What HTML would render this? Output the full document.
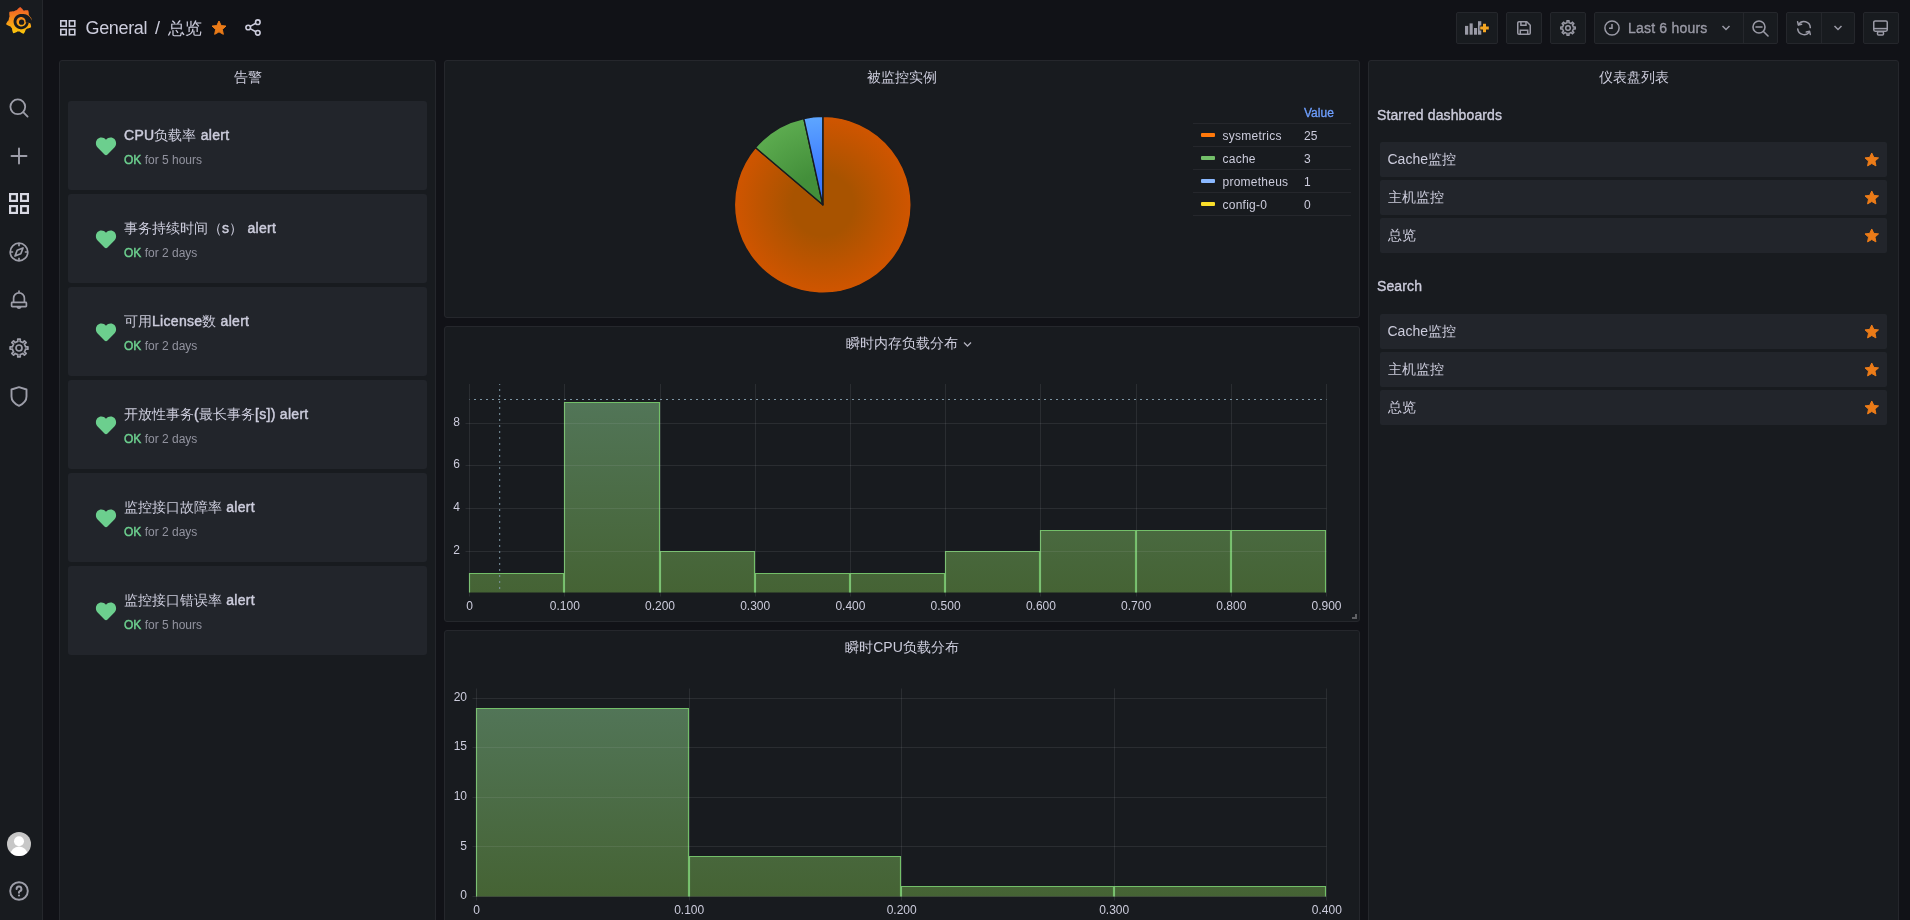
<!DOCTYPE html>
<html><head><meta charset="utf-8">
<style>
*{box-sizing:border-box;margin:0;padding:0}
html,body{width:1910px;height:920px;overflow:hidden;background:#111217;will-change:transform;font-family:"Liberation Sans",sans-serif;color:#ccccdc}
.abs{position:absolute}
#side{position:absolute;left:0;top:0;width:43px;height:920px;background:#181b1f;border-right:1px solid #25272c}
.panel{position:absolute;background:#181b1f;border:1px solid #25272c;border-radius:3px}
.ptitle{position:absolute;left:0;right:0;text-align:center;font-size:14px;line-height:16px;font-weight:normal;color:#ccccdc}
.card{position:absolute;left:8px;width:359px;height:89px;background:#22252b;border-radius:3px}
.card .ht{position:absolute;left:27px;top:35px}
.card .t1{position:absolute;left:56px;top:26px;font-size:14px;line-height:16px;color:#ccccdc;white-space:nowrap}
.m{-webkit-text-stroke:0.45px currentColor;letter-spacing:0.3px}
.card .t2{position:absolute;left:56px;top:52px;font-size:12px;line-height:14px;color:rgba(204,204,220,.65);white-space:nowrap}
.card .t2 b{color:#6ccf8e;font-weight:normal;-webkit-text-stroke:0.45px currentColor}
.btn{position:absolute;top:12px;height:32px;background:#181b1f;border:1px solid #25272c;border-radius:2px}
.dl{position:absolute;left:11px;width:507px;height:34.6px;background:#22252b;border-radius:2px;font-size:14px;line-height:34px;padding-left:7.5px;color:#ccccdc}
.dl svg{position:absolute;right:7.5px;top:10.2px}
.sh{position:absolute;left:8px;font-size:14px;color:#ccccdc;letter-spacing:0.12px;-webkit-text-stroke:0.35px currentColor}
</style></head>
<body>

<div id="side">
 <svg class="abs" style="left:0;top:0" width="42" height="42" viewBox="0 0 42 42">
  <defs><linearGradient id="lg" x1="0" y1="7" x2="0" y2="34" gradientUnits="userSpaceOnUse"><stop offset="0" stop-color="#f05a28"/><stop offset="1" stop-color="#fbca0a"/></linearGradient></defs>
  <path fill="url(#lg)" d="M8.26 20.60 L8.47 20.38 L8.69 20.17 L8.72 19.96 L8.73 19.74 L8.75 19.53 L8.78 19.32 L8.80 19.11 L8.83 18.89 L8.87 18.68 L8.91 18.47 L8.95 18.26 L9.00 18.06 L9.05 17.85 L9.11 17.64 L9.17 17.44 L9.23 17.23 L9.30 17.03 L9.37 16.83 L9.45 16.63 L9.53 16.43 L9.57 16.21 L9.51 15.95 L9.45 15.68 L9.40 15.40 L9.36 15.13 L9.33 14.85 L9.30 14.56 L9.28 14.28 L9.27 13.99 L9.27 13.70 L9.27 13.40 L9.28 13.10 L9.30 12.80 L9.33 12.50 L9.36 12.20 L9.41 11.90 L9.71 11.81 L10.00 11.73 L10.29 11.65 L10.59 11.59 L10.88 11.53 L11.17 11.48 L11.46 11.44 L11.75 11.41 L12.04 11.38 L12.32 11.36 L12.60 11.35 L12.88 11.35 L13.16 11.36 L13.43 11.37 L13.70 11.39 L13.90 11.31 L14.09 11.20 L14.27 11.09 L14.46 10.99 L14.65 10.89 L14.84 10.79 L15.04 10.70 L15.23 10.61 L15.43 10.53 L15.63 10.45 L15.83 10.37 L16.03 10.30 L16.23 10.23 L16.44 10.17 L16.64 10.11 L16.85 10.05 L17.01 9.82 L17.19 9.60 L17.37 9.38 L17.56 9.16 L17.76 8.95 L17.96 8.74 L18.17 8.54 L18.39 8.33 L18.62 8.13 L18.85 7.94 L19.10 7.75 L19.34 7.57 L19.60 7.39 L19.86 7.21 L20.13 7.04 L20.39 7.14 L20.64 7.34 L20.89 7.54 L21.12 7.74 L21.35 7.95 L21.57 8.16 L21.78 8.38 L21.99 8.60 L22.18 8.82 L22.37 9.05 L22.56 9.28 L22.73 9.51 L22.89 9.74 L23.05 9.98 L23.20 10.21 L23.37 10.37 L23.57 10.45 L23.77 10.53 L24.01 10.53 L24.27 10.47 L24.54 10.42 L24.81 10.38 L25.08 10.34 L25.36 10.31 L25.65 10.29 L25.93 10.27 L26.22 10.26 L26.51 10.26 L26.80 10.27 L27.10 10.28 L27.39 10.30 L27.69 10.33 L28.00 10.37 L28.23 10.49 L28.32 10.79 L28.40 11.08 L28.48 11.37 L28.55 11.65 L28.60 11.94 L28.65 12.23 L28.70 12.52 L28.73 12.80 L28.76 13.08 L28.78 13.36 L28.79 13.64 L28.80 13.92 L28.80 14.19 L28.79 14.46 L28.78 14.72 L28.89 14.90 L29.00 15.09 L29.11 15.27 L29.21 15.46 L29.31 15.65 L29.41 15.84 L29.50 16.04 L29.66 16.20 L29.82 16.37 L29.97 16.54 L30.12 16.72 L30.27 16.90 L30.42 17.08 L30.56 17.27 L30.70 17.47 L30.84 17.67 L30.97 17.87 L31.10 18.08 L31.22 18.29 L31.34 18.50 L31.46 18.72 L31.57 18.94 L31.56 19.18 L31.51 19.43 L31.45 19.67 L31.39 19.90 L31.32 20.14 L31.25 20.37 L31.17 20.60 L31.09 20.83 L31.01 21.05 L30.92 21.27 L30.82 21.48 L30.72 21.70 L30.62 21.90 L30.52 22.11 L30.41 22.31 L30.33 22.52 L30.29 22.73 L30.25 22.94 L30.31 23.17 L30.41 23.42 L30.50 23.67 L30.58 23.93 L30.66 24.19 L30.74 24.46 L30.80 24.73 L30.86 25.01 L30.92 25.29 L30.96 25.57 L31.01 25.86 L31.04 26.15 L31.07 26.44 L31.08 26.74 L31.10 27.04 L30.98 27.27 L30.71 27.41 L30.45 27.54 L30.18 27.67 L29.91 27.79 L29.64 27.90 L29.38 28.00 L29.11 28.10 L28.84 28.18 L28.57 28.26 L28.30 28.33 L28.04 28.40 L27.77 28.46 L27.51 28.51 L27.24 28.55 L27.00 28.60 L26.84 28.75 L26.68 28.89 L26.51 29.03 L26.35 29.16 L26.18 29.29 L26.01 29.42 L25.83 29.54 L25.68 29.70 L25.61 29.98 L25.52 30.26 L25.42 30.54 L25.32 30.81 L25.21 31.09 L25.09 31.37 L24.96 31.64 L24.82 31.92 L24.67 32.19 L24.51 32.47 L24.35 32.74 L24.18 33.00 L23.99 33.27 L23.80 33.53 L23.60 33.80 L23.29 33.70 L22.99 33.58 L22.69 33.46 L22.39 33.34 L22.11 33.20 L21.83 33.06 L21.55 32.92 L21.28 32.77 L21.02 32.61 L20.77 32.44 L20.52 32.28 L20.28 32.10 L20.04 31.93 L19.82 31.74 L19.60 31.56 L19.39 31.50 L19.17 31.49 L18.96 31.48 L18.74 31.47 L18.53 31.45 L18.32 31.42 L18.11 31.40 L17.89 31.37 L17.67 31.40 L17.42 31.57 L17.16 31.73 L16.89 31.89 L16.62 32.04 L16.33 32.18 L16.05 32.31 L15.75 32.44 L15.45 32.57 L15.14 32.68 L14.83 32.79 L14.51 32.89 L14.19 32.98 L13.85 33.06 L13.52 33.14 L13.19 33.18 L13.04 32.86 L12.91 32.55 L12.78 32.23 L12.67 31.92 L12.56 31.60 L12.46 31.28 L12.37 30.97 L12.30 30.65 L12.23 30.34 L12.17 30.03 L12.12 29.72 L12.08 29.41 L12.05 29.10 L12.03 28.79 L12.01 28.49 L11.89 28.31 L11.74 28.15 L11.60 28.00 L11.45 27.84 L11.31 27.68 L11.17 27.51 L11.04 27.35 L10.91 27.18 L10.78 27.01 L10.66 26.83 L10.54 26.66 L10.42 26.48 L10.23 26.34 L9.94 26.26 L9.65 26.18 L9.35 26.08 L9.06 25.97 L8.77 25.85 L8.49 25.72 L8.20 25.59 L7.91 25.44 L7.62 25.29 L7.34 25.12 L7.06 24.95 L6.78 24.77 L6.50 24.57 L6.22 24.37 L6.02 24.14 L6.16 23.83 L6.30 23.52 L6.45 23.22 L6.60 22.92 L6.77 22.63 L6.93 22.35 L7.11 22.08 L7.29 21.81 L7.47 21.55 L7.66 21.30 L7.86 21.06 L8.06 20.83 Z"/>
  <path fill="#181b1f" d="M32.23 23.54 L32.21 23.10 L32.17 22.66 L32.11 22.22 L32.04 21.79 L31.95 21.37 L31.84 20.95 L31.72 20.54 L31.58 20.14 L31.42 19.75 L31.26 19.37 L31.07 19.00 L30.88 18.64 L30.67 18.29 L30.45 17.96 L30.22 17.63 L29.97 17.32 L29.72 17.02 L29.45 16.74 L29.18 16.47 L28.90 16.21 L28.61 15.96 L28.31 15.74 L28.01 15.52 L27.70 15.32 L27.39 15.13 L27.07 14.96 L26.75 14.81 L26.42 14.67 L26.10 14.54 L25.77 14.43 L25.44 14.34 L25.11 14.25 L24.78 14.19 L24.45 14.14 L24.12 14.10 L23.79 14.07 L23.47 14.06 L23.15 14.07 L22.83 14.09 L22.52 14.12 L22.22 14.07 L21.93 14.03 L21.63 14.01 L21.33 14.00 L21.03 14.00 L20.74 14.01 L20.44 14.04 L20.14 14.07 L19.85 14.12 L19.56 14.18 L19.27 14.25 L18.98 14.33 L18.69 14.42 L18.41 14.53 L18.14 14.64 L17.87 14.77 L17.60 14.91 L17.34 15.05 L17.09 15.21 L16.84 15.37 L16.60 15.55 L16.37 15.74 L16.14 15.93 L15.92 16.13 L15.71 16.34 L15.51 16.56 L15.31 16.79 L15.13 17.03 L14.96 17.27 L14.79 17.52 L14.63 17.77 L14.49 18.03 L14.35 18.30 L14.23 18.57 L14.12 18.85 L14.01 19.13 L13.92 19.41 L13.84 19.70 L13.77 19.99 L13.72 20.28 L13.67 20.58 L13.63 20.87 L13.61 21.17 L13.60 21.47 L13.60 21.77 L13.61 22.06 L13.64 22.36 L13.67 22.66 L13.72 22.95 L13.78 23.24 L13.85 23.53 L13.93 23.82 L14.02 24.11 L14.13 24.39 L14.24 24.66 L14.37 24.93 L14.51 25.20 L14.65 25.46 L14.81 25.71 L14.97 25.96 L15.15 26.20 L15.34 26.43 L15.53 26.66 L15.73 26.88 L15.94 27.09 L16.16 27.29 L16.39 27.49 L16.63 27.67 L16.87 27.84 L17.12 28.01 L17.37 28.17 L17.63 28.31 L17.90 28.45 L18.17 28.57 L18.45 28.68 L18.73 28.79 L19.01 28.88 L19.30 28.96 L19.59 29.03 L19.88 29.08 L20.18 29.13 L20.47 29.17 L20.77 29.19 L21.07 29.20 L21.37 29.20 L21.66 29.19 L21.96 29.16 L22.26 29.13 L22.55 29.08 L22.84 29.02 L23.13 28.95 L23.42 28.87 L23.71 28.78 L23.99 28.67 L24.26 28.56 L24.53 28.43 L24.80 28.29 L25.06 28.15 L25.31 27.99 L25.56 27.83 L25.80 27.65 L26.03 27.46 L26.26 27.27 L26.48 27.07 L26.69 26.86 L26.89 26.64 L27.09 26.41 L27.27 26.17 L27.44 25.93 L27.61 25.68 L27.77 25.43 L27.91 25.17 L28.05 24.90 L28.17 24.63 L28.28 24.35 L28.39 24.07 L28.48 23.79 L28.56 23.50 L28.63 23.21 L28.68 22.92 L26.12 22.47 L26.08 22.66 L26.03 22.85 L25.98 23.04 L25.91 23.22 L25.84 23.41 L25.76 23.58 L25.68 23.76 L25.59 23.93 L25.49 24.10 L25.39 24.27 L25.27 24.43 L25.16 24.58 L25.03 24.73 L24.91 24.88 L24.77 25.02 L24.63 25.15 L24.49 25.28 L24.34 25.41 L24.18 25.52 L24.02 25.63 L23.86 25.74 L23.70 25.84 L23.53 25.93 L23.35 26.01 L23.18 26.09 L23.00 26.16 L22.82 26.22 L22.63 26.28 L22.45 26.33 L22.26 26.37 L22.07 26.41 L21.88 26.43 L21.69 26.45 L21.50 26.46 L21.31 26.47 L21.12 26.46 L20.92 26.45 L20.73 26.44 L20.55 26.41 L20.36 26.38 L20.17 26.34 L19.99 26.29 L19.81 26.23 L19.63 26.17 L19.45 26.10 L19.28 26.03 L19.10 25.94 L18.94 25.86 L18.77 25.76 L18.61 25.66 L18.46 25.55 L18.31 25.44 L18.16 25.32 L18.02 25.19 L17.89 25.06 L17.75 24.93 L17.63 24.79 L17.51 24.64 L17.40 24.49 L17.29 24.34 L17.19 24.18 L17.09 24.02 L17.00 23.85 L16.92 23.69 L16.85 23.52 L16.78 23.34 L16.72 23.17 L16.66 22.99 L16.61 22.81 L16.57 22.63 L16.54 22.44 L16.52 22.26 L16.50 22.07 L16.49 21.89 L16.48 21.70 L16.49 21.52 L16.50 21.33 L16.51 21.15 L16.54 20.97 L16.57 20.78 L16.61 20.60 L16.66 20.43 L16.71 20.25 L16.77 20.07 L16.84 19.90 L16.91 19.73 L16.99 19.57 L17.08 19.41 L17.17 19.25 L17.27 19.09 L17.37 18.94 L17.48 18.80 L17.60 18.66 L17.72 18.52 L17.85 18.39 L17.98 18.26 L18.11 18.14 L18.25 18.03 L18.40 17.92 L18.55 17.81 L18.70 17.71 L18.86 17.62 L19.02 17.54 L19.18 17.46 L19.34 17.38 L19.51 17.32 L19.68 17.26 L19.86 17.21 L20.03 17.16 L20.21 17.12 L20.38 17.09 L20.56 17.06 L20.74 17.05 L20.92 17.04 L21.10 17.03 L21.28 17.04 L21.46 17.05 L21.64 17.06 L21.81 17.09 L21.99 17.12 L22.16 17.16 L22.34 17.20 L22.51 17.25 L22.68 17.31 L22.84 17.38 L23.01 17.45 L23.17 17.53 L23.32 17.61 L23.48 17.70 L23.62 17.79 L23.77 17.90 L23.91 18.00 L24.05 18.11 L24.18 18.23 L24.31 18.35 L24.43 18.48 L24.55 18.61 L24.66 18.75 L24.77 18.89 L24.87 19.03 L24.96 19.18 L25.05 19.33 L25.13 19.49 L25.21 19.64 L25.28 19.81 L25.34 19.97 L25.40 20.13 L25.45 20.30 L25.49 20.47 L25.53 20.64 L25.56 20.81 L25.59 20.98 L25.60 21.16 L25.61 21.33 L25.62 21.50 L25.61 21.68 L25.60 21.85 L25.59 22.02 L25.56 22.19 L25.53 22.36 Z"/>
  <circle cx="21.6" cy="22.2" r="2.6" fill="#181b1f"/>
 </svg>
 <svg class="abs" style="left:9px;top:98px" width="20" height="20" viewBox="0 0 20 20" fill="none" stroke="#9d9ea9" stroke-width="1.8"><circle cx="8.8" cy="8.8" r="7.4"/><path d="M14.2 14.2 L18.6 18.6" stroke-linecap="round"/></svg>
 <svg class="abs" style="left:10px;top:147px" width="18" height="18" viewBox="0 0 18 18" fill="none" stroke="#9d9ea9" stroke-width="1.9"><path d="M9 1.5 V16.5 M1.5 9 H16.5" stroke-linecap="round"/></svg>
 <svg class="abs" style="left:9px;top:193px" width="20" height="21" viewBox="0 0 20 21" fill="none" stroke="#d8d9e3" stroke-width="2.2"><rect x="1.1" y="1.1" width="6.8" height="6.8"/><rect x="12.1" y="1.1" width="6.8" height="6.8"/><rect x="1.1" y="13.1" width="6.8" height="6.8"/><rect x="12.1" y="13.1" width="6.8" height="6.8"/></svg>
 <svg class="abs" style="left:9px;top:242px" width="20" height="20" viewBox="0 0 20 20" fill="none" stroke="#9d9ea9" stroke-width="1.7"><circle cx="10" cy="10" r="8.8"/><path d="M14 6 L11.8 11.8 L6 14 L8.2 8.2 Z" stroke-linejoin="round"/><path d="M10 1.5 V4.2 M10 15.8 V18.5 M1.5 10 H4.2 M15.8 10 H18.5"/></svg>
 <svg class="abs" style="left:10px;top:290px" width="18" height="21" viewBox="0 0 18 21" fill="none" stroke="#9d9ea9" stroke-width="1.7"><path d="M9 0.5 V2.6"/><path d="M3.6 12.3 V8.2 A5.4 5.4 0 0 1 14.4 8.2 V12.3"/><rect x="1.6" y="12.4" width="14.8" height="4.3" rx="0.6"/><path d="M7.2 16.8 A1.9 1.9 0 0 0 10.8 16.8"/></svg>
 <svg class="abs" style="left:9px;top:338px" width="20" height="20" viewBox="0 0 20 20" fill="none" stroke="#9d9ea9" stroke-width="1.7"><path d="M7.59 3.85 L8.84 3.50 L8.73 1.09 L11.27 1.09 L11.16 3.50 L12.41 3.85 L12.64 3.95 L13.77 4.59 L15.40 2.80 L17.20 4.60 L15.41 6.23 L16.05 7.36 L16.15 7.59 L16.50 8.84 L18.91 8.73 L18.91 11.27 L16.50 11.16 L16.15 12.41 L16.05 12.64 L15.41 13.77 L17.20 15.40 L15.40 17.20 L13.77 15.41 L12.64 16.05 L12.41 16.15 L11.16 16.50 L11.27 18.91 L8.73 18.91 L8.84 16.50 L7.59 16.15 L7.36 16.05 L6.23 15.41 L4.60 17.20 L2.80 15.40 L4.59 13.77 L3.95 12.64 L3.85 12.41 L3.50 11.16 L1.09 11.27 L1.09 8.73 L3.50 8.84 L3.85 7.59 L3.95 7.36 L4.59 6.23 L2.80 4.60 L4.60 2.80 L6.23 4.59 L7.36 3.95 Z" stroke-linejoin="round"/><circle cx="10" cy="10" r="3"/></svg>
 <svg class="abs" style="left:10px;top:386px" width="18" height="21" viewBox="0 0 18 21" fill="none" stroke="#9d9ea9" stroke-width="1.9"><path d="M9 1.2 L16.5 3.5 V10.5 C16.5 15 13 18 9 19.8 C5 18 1.5 15 1.5 10.5 V3.5 Z" stroke-linejoin="round"/></svg>
 <svg class="abs" style="left:7px;top:832px" width="24" height="24" viewBox="0 0 24 24"><defs><clipPath id="av"><circle cx="12" cy="12" r="12"/></clipPath></defs><circle cx="12" cy="12" r="12" fill="#c7c7c7"/><g clip-path="url(#av)" fill="#fff"><circle cx="12" cy="9.2" r="5"/><ellipse cx="12" cy="23.2" rx="8.6" ry="8.6"/></g></svg>
 <svg class="abs" style="left:9px;top:881px" width="20" height="20" viewBox="0 0 20 20" fill="none" stroke="#9d9ea9" stroke-width="1.9"><circle cx="10" cy="10" r="8.8"/><path d="M7.6 8 A2.4 2.4 0 1 1 10.6 10.3 C10.2 10.5 10 10.8 10 11.3 V11.8" stroke-linecap="round" stroke-width="2"/><circle cx="10" cy="14.5" r="1.1" fill="#9d9ea9" stroke="none"/></svg>
</div>

<!-- topbar -->
<svg class="abs" style="left:60px;top:19.7px" width="16" height="16" viewBox="0 0 16 16" fill="none" stroke="#ccccdc" stroke-width="1.6"><rect x="0.8" y="0.8" width="5.4" height="5.4"/><rect x="9.4" y="0.8" width="5.4" height="5.4"/><rect x="0.8" y="9.4" width="5.4" height="5.4"/><rect x="9.4" y="9.4" width="5.4" height="5.4"/></svg>
<div class="abs" style="left:85.5px;top:16px;font-size:18px;line-height:24px;color:#ccccdc;white-space:nowrap;letter-spacing:-0.35px">General</div><div class="abs" style="left:155px;top:16px;font-size:18px;line-height:24px;color:#ccccdc">/</div><div class="abs" style="left:168px;top:16.5px;font-size:17px;line-height:24px;color:#ccccdc">总览</div>
<svg class="abs" style="left:211px;top:20px" width="16" height="16" viewBox="0 0 24 24"><path fill="#eb7b18" d="M12 1.5 L15.2 8.3 L22.5 9.1 L17 14.1 L18.5 21.5 L12 17.8 L5.5 21.5 L7 14.1 L1.5 9.1 L8.8 8.3 Z" stroke="#eb7b18" stroke-width="1.5" stroke-linejoin="round"/></svg>
<svg class="abs" style="left:245px;top:19px" width="16" height="17" viewBox="0 0 16 17" fill="none" stroke="#ccccdc" stroke-width="1.6"><circle cx="12.8" cy="3.2" r="2.3"/><circle cx="3.2" cy="8.5" r="2.3"/><circle cx="12.8" cy="13.8" r="2.3"/><path d="M5.2 7.4 L10.8 4.3 M5.2 9.6 L10.8 12.7"/></svg>

<div class="btn" style="left:1456px;width:42px"></div>
<div class="btn" style="left:1506px;width:36px"></div>
<div class="btn" style="left:1550px;width:36px"></div>
<div class="btn" style="left:1594px;width:184px"></div>
<div class="abs" style="left:1743px;top:13px;width:1px;height:30px;background:#25272c"></div>
<div class="btn" style="left:1786px;width:69px"></div>
<div class="abs" style="left:1821px;top:13px;width:1px;height:30px;background:#25272c"></div>
<div class="btn" style="left:1863px;width:36px"></div>

<svg class="abs" style="left:1464px;top:20px" width="26" height="16" viewBox="0 0 26 16"><g fill="#9a9aa6"><rect x="1" y="5.9" width="3.2" height="8.8"/><rect x="5.6" y="3.4" width="3.1" height="11.3"/><rect x="10" y="8" width="3.1" height="6.7"/><rect x="14" y="1.2" width="3.3" height="13.5"/></g><path d="M20.5 3.2 V12.8 M15.7 8 H25.3" stroke="#181b1f" stroke-width="5"/><path d="M20.5 3.7 V12.3 M16.2 8 H24.8" stroke="#f5a623" stroke-width="3"/></svg>
<svg class="abs" style="left:1517px;top:21px" width="14" height="14" viewBox="0 0 14 14" fill="none" stroke="#9a9aa6" stroke-width="1.5"><path d="M2 0.75 H9.8 L13.25 4.2 V12 A1.25 1.25 0 0 1 12 13.25 H2 A1.25 1.25 0 0 1 0.75 12 V2 A1.25 1.25 0 0 1 2 0.75 Z" stroke-linejoin="round"/><path d="M3.9 0.9 V4.2 H9 V1 M3.3 13.2 V9.3 H10.7 V13.2"/></svg>
<svg class="abs" style="left:1560px;top:20px" width="16" height="16" viewBox="0 0 16 16" fill="none" stroke="#9a9aa6" stroke-width="1.5"><path d="M6.03 2.97 L7.05 2.68 L6.97 0.77 L9.03 0.77 L8.95 2.68 L9.97 2.97 L10.16 3.05 L11.09 3.57 L12.38 2.16 L13.84 3.62 L12.43 4.91 L12.95 5.84 L13.03 6.03 L13.32 7.05 L15.23 6.97 L15.23 9.03 L13.32 8.95 L13.03 9.97 L12.95 10.16 L12.43 11.09 L13.84 12.38 L12.38 13.84 L11.09 12.43 L10.16 12.95 L9.97 13.03 L8.95 13.32 L9.03 15.23 L6.97 15.23 L7.05 13.32 L6.03 13.03 L5.84 12.95 L4.91 12.43 L3.62 13.84 L2.16 12.38 L3.57 11.09 L3.05 10.16 L2.97 9.97 L2.68 8.95 L0.77 9.03 L0.77 6.97 L2.68 7.05 L2.97 6.03 L3.05 5.84 L3.57 4.91 L2.16 3.62 L3.62 2.16 L4.91 3.57 L5.84 3.05 Z" stroke-linejoin="round"/><circle cx="8" cy="8" r="2.3"/></svg>
<svg class="abs" style="left:1604px;top:20px" width="16" height="16" viewBox="0 0 16 16" fill="none" stroke="#9a9aa6" stroke-width="1.5"><circle cx="8" cy="8" r="7.1"/><path d="M8 4 V8.3 H5"/></svg>
<div class="abs" style="left:1628px;top:19px;font-size:14px;line-height:18px;color:#9a9aa6;white-space:nowrap;letter-spacing:0.2px;-webkit-text-stroke:0.35px currentColor">Last 6 hours</div>
<svg class="abs" style="left:1721px;top:24px" width="10" height="8" viewBox="0 0 10 8" fill="none" stroke="#9a9aa6" stroke-width="1.5"><path d="M1.5 2 L5 5.5 L8.5 2"/></svg>
<svg class="abs" style="left:1752px;top:20px" width="17" height="17" viewBox="0 0 17 17" fill="none" stroke="#9a9aa6" stroke-width="1.6"><circle cx="7" cy="7" r="6"/><path d="M4 7 H10 M11.5 11.5 L16 16" stroke-linecap="round"/></svg>
<svg class="abs" style="left:1796px;top:20px" width="16" height="16" viewBox="0 0 16 16" fill="none" stroke="#9a9aa6" stroke-width="1.5"><path d="M2.6 4.6 A6.3 6.3 0 0 1 14.3 7.6 M1.7 8.9 A6.3 6.3 0 0 0 13.2 11.8" stroke-linecap="round"/><path d="M1.6 1.8 L2.4 5 L5.6 4.3 M14.3 14.4 L13.5 11.3 L10.3 12" stroke-linejoin="round" stroke-linecap="round"/></svg>
<svg class="abs" style="left:1833px;top:24px" width="10" height="8" viewBox="0 0 10 8" fill="none" stroke="#9a9aa6" stroke-width="1.5"><path d="M1.5 2 L5 5.5 L8.5 2"/></svg>
<svg class="abs" style="left:1873px;top:20px" width="15" height="16" viewBox="0 0 15 16" fill="none" stroke="#9a9aa6" stroke-width="1.5"><rect x="0.75" y="0.9" width="13.5" height="10.3" rx="1.4"/><path d="M0.8 8.6 H14.2"/><rect x="4.5" y="11.8" width="6" height="3.2" rx="1"/></svg>

<div class="panel" style="left:59px;top:60px;width:377px;height:880px">
 <div class="ptitle" style="top:8px">告警</div>
<div class="card" style="top:40px"><svg class="ht" width="22" height="20" viewBox="0 0 22 20"><path fill="#6ccf8e" d="M11 19.2 C10.4 19.2 10 18.9 9.5 18.4 L2.6 11.6 C1.4 10.4 0.9 9 0.9 7.3 C0.9 3.9 3.3 1.6 6.4 1.6 C8.2 1.6 9.8 2.3 11 3.7 C12.2 2.3 13.8 1.6 15.6 1.6 C18.7 1.6 21.1 3.9 21.1 7.3 C21.1 9 20.6 10.4 19.4 11.6 L12.5 18.4 C12 18.9 11.6 19.2 11 19.2 Z"/></svg><div class="t1"><span class="m">CPU</span>负载率<span class="m"> alert</span></div><div class="t2"><b>OK</b> for 5 hours</div></div>
<div class="card" style="top:133px"><svg class="ht" width="22" height="20" viewBox="0 0 22 20"><path fill="#6ccf8e" d="M11 19.2 C10.4 19.2 10 18.9 9.5 18.4 L2.6 11.6 C1.4 10.4 0.9 9 0.9 7.3 C0.9 3.9 3.3 1.6 6.4 1.6 C8.2 1.6 9.8 2.3 11 3.7 C12.2 2.3 13.8 1.6 15.6 1.6 C18.7 1.6 21.1 3.9 21.1 7.3 C21.1 9 20.6 10.4 19.4 11.6 L12.5 18.4 C12 18.9 11.6 19.2 11 19.2 Z"/></svg><div class="t1">事务持续时间（<span class="m">s</span>）<span class="m"> alert</span></div><div class="t2"><b>OK</b> for 2 days</div></div>
<div class="card" style="top:226px"><svg class="ht" width="22" height="20" viewBox="0 0 22 20"><path fill="#6ccf8e" d="M11 19.2 C10.4 19.2 10 18.9 9.5 18.4 L2.6 11.6 C1.4 10.4 0.9 9 0.9 7.3 C0.9 3.9 3.3 1.6 6.4 1.6 C8.2 1.6 9.8 2.3 11 3.7 C12.2 2.3 13.8 1.6 15.6 1.6 C18.7 1.6 21.1 3.9 21.1 7.3 C21.1 9 20.6 10.4 19.4 11.6 L12.5 18.4 C12 18.9 11.6 19.2 11 19.2 Z"/></svg><div class="t1">可用<span class="m">License</span>数<span class="m"> alert</span></div><div class="t2"><b>OK</b> for 2 days</div></div>
<div class="card" style="top:319px"><svg class="ht" width="22" height="20" viewBox="0 0 22 20"><path fill="#6ccf8e" d="M11 19.2 C10.4 19.2 10 18.9 9.5 18.4 L2.6 11.6 C1.4 10.4 0.9 9 0.9 7.3 C0.9 3.9 3.3 1.6 6.4 1.6 C8.2 1.6 9.8 2.3 11 3.7 C12.2 2.3 13.8 1.6 15.6 1.6 C18.7 1.6 21.1 3.9 21.1 7.3 C21.1 9 20.6 10.4 19.4 11.6 L12.5 18.4 C12 18.9 11.6 19.2 11 19.2 Z"/></svg><div class="t1">开放性事务<span class="m">(</span>最长事务<span class="m">[s]) alert</span></div><div class="t2"><b>OK</b> for 2 days</div></div>
<div class="card" style="top:412px"><svg class="ht" width="22" height="20" viewBox="0 0 22 20"><path fill="#6ccf8e" d="M11 19.2 C10.4 19.2 10 18.9 9.5 18.4 L2.6 11.6 C1.4 10.4 0.9 9 0.9 7.3 C0.9 3.9 3.3 1.6 6.4 1.6 C8.2 1.6 9.8 2.3 11 3.7 C12.2 2.3 13.8 1.6 15.6 1.6 C18.7 1.6 21.1 3.9 21.1 7.3 C21.1 9 20.6 10.4 19.4 11.6 L12.5 18.4 C12 18.9 11.6 19.2 11 19.2 Z"/></svg><div class="t1">监控接口故障率<span class="m"> alert</span></div><div class="t2"><b>OK</b> for 2 days</div></div>
<div class="card" style="top:505px"><svg class="ht" width="22" height="20" viewBox="0 0 22 20"><path fill="#6ccf8e" d="M11 19.2 C10.4 19.2 10 18.9 9.5 18.4 L2.6 11.6 C1.4 10.4 0.9 9 0.9 7.3 C0.9 3.9 3.3 1.6 6.4 1.6 C8.2 1.6 9.8 2.3 11 3.7 C12.2 2.3 13.8 1.6 15.6 1.6 C18.7 1.6 21.1 3.9 21.1 7.3 C21.1 9 20.6 10.4 19.4 11.6 L12.5 18.4 C12 18.9 11.6 19.2 11 19.2 Z"/></svg><div class="t1">监控接口错误率<span class="m"> alert</span></div><div class="t2"><b>OK</b> for 5 hours</div></div>
</div>

<div class="panel" style="left:444px;top:60px;width:916px;height:258px">
 <div class="ptitle" style="top:8px">被监控实例</div>
 <div id="pie"><svg class="abs" style="left:0;top:0" width="916" height="258" viewBox="0 0 916 258"><defs><radialGradient id="pg0" gradientUnits="userSpaceOnUse" cx="377.8" cy="143.8" r="88.4"><stop offset="0" stop-color="#a85300"/><stop offset="0.35" stop-color="#a85300"/><stop offset="1" stop-color="#d05500"/></radialGradient><radialGradient id="pg1" gradientUnits="userSpaceOnUse" cx="377.8" cy="143.8" r="88.4"><stop offset="0" stop-color="#438f3a"/><stop offset="0.35" stop-color="#438f3a"/><stop offset="1" stop-color="#5cab4f"/></radialGradient><radialGradient id="pg2" gradientUnits="userSpaceOnUse" cx="377.8" cy="143.8" r="88.4"><stop offset="0" stop-color="#3a78ff"/><stop offset="0.35" stop-color="#3a78ff"/><stop offset="1" stop-color="#5ea6ff"/></radialGradient></defs><path d="M377.8,143.8 L377.80,55.40 A88.4,88.4 0 1 1 310.42,86.57 Z" fill="url(#pg0)" stroke="#181b1f" stroke-width="1.4" stroke-linejoin="round"/><path d="M377.8,143.8 L310.42,86.57 A88.4,88.4 0 0 1 358.80,57.47 Z" fill="url(#pg1)" stroke="#181b1f" stroke-width="1.4" stroke-linejoin="round"/><path d="M377.8,143.8 L358.80,57.47 A88.4,88.4 0 0 1 377.80,55.40 Z" fill="url(#pg2)" stroke="#181b1f" stroke-width="1.4" stroke-linejoin="round"/></svg><div class="abs" style="left:859px;top:45px;font-size:12px;line-height:14px;color:#6e9fff;-webkit-text-stroke:0.3px currentColor">Value</div><div class="abs" style="left:748px;top:62px;width:158px;height:1px;background:#25272c"></div><div class="abs" style="left:748px;top:85px;width:158px;height:1px;background:#25272c"></div><div class="abs" style="left:756px;top:72px;width:14px;height:4px;border-radius:1px;background:#ff780a"></div><div class="abs" style="left:777.5px;top:68px;font-size:12px;line-height:14px;color:#ccccdc;letter-spacing:0.25px">sysmetrics</div><div class="abs" style="left:859px;top:68px;font-size:12px;line-height:14px;color:#ccccdc">25</div><div class="abs" style="left:748px;top:108px;width:158px;height:1px;background:#25272c"></div><div class="abs" style="left:756px;top:95px;width:14px;height:4px;border-radius:1px;background:#73bf69"></div><div class="abs" style="left:777.5px;top:91px;font-size:12px;line-height:14px;color:#ccccdc;letter-spacing:0.25px">cache</div><div class="abs" style="left:859px;top:91px;font-size:12px;line-height:14px;color:#ccccdc">3</div><div class="abs" style="left:748px;top:131px;width:158px;height:1px;background:#25272c"></div><div class="abs" style="left:756px;top:118px;width:14px;height:4px;border-radius:1px;background:#8ab8ff"></div><div class="abs" style="left:777.5px;top:114px;font-size:12px;line-height:14px;color:#ccccdc;letter-spacing:0.25px">prometheus</div><div class="abs" style="left:859px;top:114px;font-size:12px;line-height:14px;color:#ccccdc">1</div><div class="abs" style="left:748px;top:154px;width:158px;height:1px;background:#25272c"></div><div class="abs" style="left:756px;top:141px;width:14px;height:4px;border-radius:1px;background:#fade2a"></div><div class="abs" style="left:777.5px;top:137px;font-size:12px;line-height:14px;color:#ccccdc;letter-spacing:0.25px">config-0</div><div class="abs" style="left:859px;top:137px;font-size:12px;line-height:14px;color:#ccccdc">0</div></div><!--pie-->
</div>

<div class="panel" style="left:444px;top:326px;width:916px;height:296px">
 <div class="ptitle" style="top:8px"><span style="position:relative;display:inline-block">瞬时内存负载分布<svg style="position:absolute;left:calc(100% + 5px);top:5.5px" width="9" height="7" viewBox="0 0 9 7" fill="none" stroke="#b0b0bc" stroke-width="1.3"><path d="M1 1.5 L4.5 5 L8 1.5"/></svg></span></div>
 <div id="h1"><svg class="abs" style="left:0;top:0" width="916" height="320" viewBox="0 0 916 320"><defs><linearGradient id="hg1" gradientUnits="userSpaceOnUse" x1="0" y1="57" x2="0" y2="267.0"><stop offset="0" stop-color="#53775b"/><stop offset="1" stop-color="#456334"/></linearGradient></defs><rect x="24.5" y="246.5" width="94.0" height="19.0" fill="url(#hg1)"/><path d="M24.5,265.5 V246.5 H118.5 V265.5" fill="none" stroke="#73bf69" stroke-width="1.15"/><rect x="119.5" y="75.5" width="95.0" height="190.0" fill="url(#hg1)"/><path d="M119.5,265.5 V75.5 H214.5 V265.5" fill="none" stroke="#73bf69" stroke-width="1.15"/><rect x="215.5" y="224.5" width="94.0" height="41.0" fill="url(#hg1)"/><path d="M215.5,265.5 V224.5 H309.5 V265.5" fill="none" stroke="#73bf69" stroke-width="1.15"/><rect x="310.5" y="246.5" width="94.0" height="19.0" fill="url(#hg1)"/><path d="M310.5,265.5 V246.5 H404.5 V265.5" fill="none" stroke="#73bf69" stroke-width="1.15"/><rect x="405.5" y="246.5" width="94.0" height="19.0" fill="url(#hg1)"/><path d="M405.5,265.5 V246.5 H499.5 V265.5" fill="none" stroke="#73bf69" stroke-width="1.15"/><rect x="500.5" y="224.5" width="94.0" height="41.0" fill="url(#hg1)"/><path d="M500.5,265.5 V224.5 H594.5 V265.5" fill="none" stroke="#73bf69" stroke-width="1.15"/><rect x="595.5" y="203.5" width="95.0" height="62.0" fill="url(#hg1)"/><path d="M595.5,265.5 V203.5 H690.5 V265.5" fill="none" stroke="#73bf69" stroke-width="1.15"/><rect x="691.5" y="203.5" width="94.0" height="62.0" fill="url(#hg1)"/><path d="M691.5,265.5 V203.5 H785.5 V265.5" fill="none" stroke="#73bf69" stroke-width="1.15"/><rect x="786.5" y="203.5" width="94.0" height="62.0" fill="url(#hg1)"/><path d="M786.5,265.5 V203.5 H880.5 V265.5" fill="none" stroke="#73bf69" stroke-width="1.15"/><line x1="24.5" y1="57" x2="24.5" y2="269.5" stroke="rgba(204,204,220,0.1)" stroke-width="1"/><line x1="119.5" y1="57" x2="119.5" y2="269.5" stroke="rgba(204,204,220,0.1)" stroke-width="1"/><line x1="215.5" y1="57" x2="215.5" y2="269.5" stroke="rgba(204,204,220,0.1)" stroke-width="1"/><line x1="310.5" y1="57" x2="310.5" y2="269.5" stroke="rgba(204,204,220,0.1)" stroke-width="1"/><line x1="405.5" y1="57" x2="405.5" y2="269.5" stroke="rgba(204,204,220,0.1)" stroke-width="1"/><line x1="500.5" y1="57" x2="500.5" y2="269.5" stroke="rgba(204,204,220,0.1)" stroke-width="1"/><line x1="595.5" y1="57" x2="595.5" y2="269.5" stroke="rgba(204,204,220,0.1)" stroke-width="1"/><line x1="691.5" y1="57" x2="691.5" y2="269.5" stroke="rgba(204,204,220,0.1)" stroke-width="1"/><line x1="786.5" y1="57" x2="786.5" y2="269.5" stroke="rgba(204,204,220,0.1)" stroke-width="1"/><line x1="881.5" y1="57" x2="881.5" y2="269.5" stroke="rgba(204,204,220,0.1)" stroke-width="1"/><line x1="20.5" y1="224.5" x2="881.5" y2="224.5" stroke="rgba(204,204,220,0.1)" stroke-width="1"/><line x1="20.5" y1="181.5" x2="881.5" y2="181.5" stroke="rgba(204,204,220,0.1)" stroke-width="1"/><line x1="20.5" y1="138.5" x2="881.5" y2="138.5" stroke="rgba(204,204,220,0.1)" stroke-width="1"/><line x1="20.5" y1="96.5" x2="881.5" y2="96.5" stroke="rgba(204,204,220,0.1)" stroke-width="1"/><line x1="24.600000000000023" y1="72.5" x2="881.49" y2="72.5" stroke="#7d95a3" stroke-width="1" stroke-dasharray="2 4" stroke-dashoffset="1.6"/><line x1="54.69999999999999" y1="57" x2="54.69999999999999" y2="265.29999999999995" stroke="#7d95a3" stroke-width="1" stroke-dasharray="2 4" stroke-dashoffset="1"/></svg><div class="abs" style="left:-25px;width:40px;text-align:right;top:215.8px;font-size:12px;line-height:14px;color:#ccccdc">2</div><div class="abs" style="left:-25px;width:40px;text-align:right;top:173.0px;font-size:12px;line-height:14px;color:#ccccdc">4</div><div class="abs" style="left:-25px;width:40px;text-align:right;top:130.3px;font-size:12px;line-height:14px;color:#ccccdc">6</div><div class="abs" style="left:-25px;width:40px;text-align:right;top:87.5px;font-size:12px;line-height:14px;color:#ccccdc">8</div><div class="abs" style="left:-15.4px;width:80px;text-align:center;top:271.8px;font-size:12px;line-height:14px;color:#ccccdc">0</div><div class="abs" style="left:79.8px;width:80px;text-align:center;top:271.8px;font-size:12px;line-height:14px;color:#ccccdc">0.100</div><div class="abs" style="left:175.0px;width:80px;text-align:center;top:271.8px;font-size:12px;line-height:14px;color:#ccccdc">0.200</div><div class="abs" style="left:270.2px;width:80px;text-align:center;top:271.8px;font-size:12px;line-height:14px;color:#ccccdc">0.300</div><div class="abs" style="left:365.4px;width:80px;text-align:center;top:271.8px;font-size:12px;line-height:14px;color:#ccccdc">0.400</div><div class="abs" style="left:460.6px;width:80px;text-align:center;top:271.8px;font-size:12px;line-height:14px;color:#ccccdc">0.500</div><div class="abs" style="left:555.9px;width:80px;text-align:center;top:271.8px;font-size:12px;line-height:14px;color:#ccccdc">0.600</div><div class="abs" style="left:651.1px;width:80px;text-align:center;top:271.8px;font-size:12px;line-height:14px;color:#ccccdc">0.700</div><div class="abs" style="left:746.3px;width:80px;text-align:center;top:271.8px;font-size:12px;line-height:14px;color:#ccccdc">0.800</div><div class="abs" style="left:841.5px;width:80px;text-align:center;top:271.8px;font-size:12px;line-height:14px;color:#ccccdc">0.900</div><div class="abs" style="left:910px;top:287px;width:2px;height:5px;background:#5f6064"></div><div class="abs" style="left:907px;top:290px;width:5px;height:2px;background:#5f6064"></div></div><!--h1-->
</div>

<div class="panel" style="left:444px;top:630px;width:916px;height:310px">
 <div class="ptitle" style="top:8px">瞬时CPU负载分布</div>
 <div id="h2"><svg class="abs" style="left:0;top:0" width="916" height="320" viewBox="0 0 916 320"><defs><linearGradient id="hg2" gradientUnits="userSpaceOnUse" x1="0" y1="57.5" x2="0" y2="265.5"><stop offset="0" stop-color="#53775b"/><stop offset="1" stop-color="#456334"/></linearGradient></defs><rect x="31.5" y="77.5" width="212.0" height="188.0" fill="url(#hg2)"/><path d="M31.5,265.5 V77.5 H243.5 V265.5" fill="none" stroke="#73bf69" stroke-width="1.15"/><rect x="244.5" y="225.5" width="211.0" height="40.0" fill="url(#hg2)"/><path d="M244.5,265.5 V225.5 H455.5 V265.5" fill="none" stroke="#73bf69" stroke-width="1.15"/><rect x="456.5" y="255.5" width="212.0" height="10.0" fill="url(#hg2)"/><path d="M456.5,265.5 V255.5 H668.5 V265.5" fill="none" stroke="#73bf69" stroke-width="1.15"/><rect x="669.5" y="255.5" width="211.0" height="10.0" fill="url(#hg2)"/><path d="M669.5,265.5 V255.5 H880.5 V265.5" fill="none" stroke="#73bf69" stroke-width="1.15"/><line x1="31.5" y1="57.5" x2="31.5" y2="269.5" stroke="rgba(204,204,220,0.1)" stroke-width="1"/><line x1="244.5" y1="57.5" x2="244.5" y2="269.5" stroke="rgba(204,204,220,0.1)" stroke-width="1"/><line x1="456.5" y1="57.5" x2="456.5" y2="269.5" stroke="rgba(204,204,220,0.1)" stroke-width="1"/><line x1="669.5" y1="57.5" x2="669.5" y2="269.5" stroke="rgba(204,204,220,0.1)" stroke-width="1"/><line x1="881.5" y1="57.5" x2="881.5" y2="269.5" stroke="rgba(204,204,220,0.1)" stroke-width="1"/><line x1="27.5" y1="265.5" x2="881.5" y2="265.5" stroke="rgba(204,204,220,0.1)" stroke-width="1"/><line x1="27.5" y1="215.5" x2="881.5" y2="215.5" stroke="rgba(204,204,220,0.1)" stroke-width="1"/><line x1="27.5" y1="166.5" x2="881.5" y2="166.5" stroke="rgba(204,204,220,0.1)" stroke-width="1"/><line x1="27.5" y1="116.5" x2="881.5" y2="116.5" stroke="rgba(204,204,220,0.1)" stroke-width="1"/><line x1="27.5" y1="67.5" x2="881.5" y2="67.5" stroke="rgba(204,204,220,0.1)" stroke-width="1"/></svg><div class="abs" style="left:-18px;width:40px;text-align:right;top:257.0px;font-size:12px;line-height:14px;color:#ccccdc">0</div><div class="abs" style="left:-18px;width:40px;text-align:right;top:207.5px;font-size:12px;line-height:14px;color:#ccccdc">5</div><div class="abs" style="left:-18px;width:40px;text-align:right;top:157.9px;font-size:12px;line-height:14px;color:#ccccdc">10</div><div class="abs" style="left:-18px;width:40px;text-align:right;top:108.4px;font-size:12px;line-height:14px;color:#ccccdc">15</div><div class="abs" style="left:-18px;width:40px;text-align:right;top:58.8px;font-size:12px;line-height:14px;color:#ccccdc">20</div><div class="abs" style="left:-8.4px;width:80px;text-align:center;top:271.5px;font-size:12px;line-height:14px;color:#ccccdc">0</div><div class="abs" style="left:204.2px;width:80px;text-align:center;top:271.5px;font-size:12px;line-height:14px;color:#ccccdc">0.100</div><div class="abs" style="left:416.7px;width:80px;text-align:center;top:271.5px;font-size:12px;line-height:14px;color:#ccccdc">0.200</div><div class="abs" style="left:629.2px;width:80px;text-align:center;top:271.5px;font-size:12px;line-height:14px;color:#ccccdc">0.300</div><div class="abs" style="left:841.8px;width:80px;text-align:center;top:271.5px;font-size:12px;line-height:14px;color:#ccccdc">0.400</div></div><!--h2-->
</div>

<div class="panel" style="left:1368px;top:60px;width:531px;height:880px">
 <div class="ptitle" style="top:8px">仪表盘列表</div>
 <div class="sh" style="top:46px">Starred dashboards</div>
 <div class="sh" style="top:217px">Search</div>
<div class="dl" style="top:81px">Cache监控<svg class="abs"  width="15.5" height="15.5" viewBox="0 0 24 24"><path fill="#eb7b18" stroke="#eb7b18" stroke-width="1.5" stroke-linejoin="round" d="M12 1.5 L15.2 8.3 L22.5 9.1 L17 14.1 L18.5 21.5 L12 17.8 L5.5 21.5 L7 14.1 L1.5 9.1 L8.8 8.3 Z"/></svg></div>
<div class="dl" style="top:119px">主机监控<svg class="abs"  width="15.5" height="15.5" viewBox="0 0 24 24"><path fill="#eb7b18" stroke="#eb7b18" stroke-width="1.5" stroke-linejoin="round" d="M12 1.5 L15.2 8.3 L22.5 9.1 L17 14.1 L18.5 21.5 L12 17.8 L5.5 21.5 L7 14.1 L1.5 9.1 L8.8 8.3 Z"/></svg></div>
<div class="dl" style="top:157px">总览<svg class="abs"  width="15.5" height="15.5" viewBox="0 0 24 24"><path fill="#eb7b18" stroke="#eb7b18" stroke-width="1.5" stroke-linejoin="round" d="M12 1.5 L15.2 8.3 L22.5 9.1 L17 14.1 L18.5 21.5 L12 17.8 L5.5 21.5 L7 14.1 L1.5 9.1 L8.8 8.3 Z"/></svg></div>
<div class="dl" style="top:253px">Cache监控<svg class="abs"  width="15.5" height="15.5" viewBox="0 0 24 24"><path fill="#eb7b18" stroke="#eb7b18" stroke-width="1.5" stroke-linejoin="round" d="M12 1.5 L15.2 8.3 L22.5 9.1 L17 14.1 L18.5 21.5 L12 17.8 L5.5 21.5 L7 14.1 L1.5 9.1 L8.8 8.3 Z"/></svg></div>
<div class="dl" style="top:291px">主机监控<svg class="abs"  width="15.5" height="15.5" viewBox="0 0 24 24"><path fill="#eb7b18" stroke="#eb7b18" stroke-width="1.5" stroke-linejoin="round" d="M12 1.5 L15.2 8.3 L22.5 9.1 L17 14.1 L18.5 21.5 L12 17.8 L5.5 21.5 L7 14.1 L1.5 9.1 L8.8 8.3 Z"/></svg></div>
<div class="dl" style="top:329px">总览<svg class="abs"  width="15.5" height="15.5" viewBox="0 0 24 24"><path fill="#eb7b18" stroke="#eb7b18" stroke-width="1.5" stroke-linejoin="round" d="M12 1.5 L15.2 8.3 L22.5 9.1 L17 14.1 L18.5 21.5 L12 17.8 L5.5 21.5 L7 14.1 L1.5 9.1 L8.8 8.3 Z"/></svg></div>
</div>
</body></html>
